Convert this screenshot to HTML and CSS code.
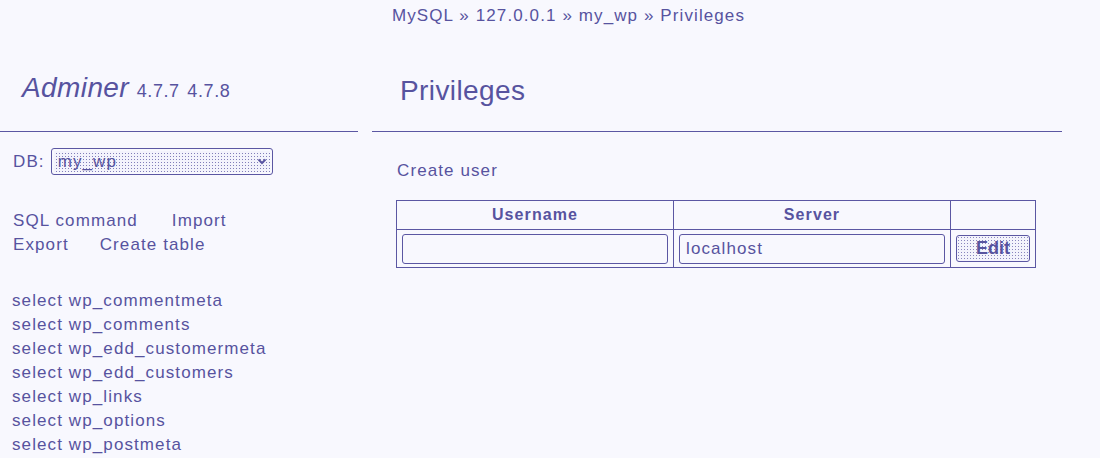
FILE: index.html
```html
<!DOCTYPE html>
<html>
<head>
<meta charset="utf-8">
<title>Privileges - Adminer</title>
<link rel="stylesheet" href="styles.css">
</head>
<body>
<div class="page">
  <div class="menu">
    <h1 class="logo"><a class="brand" href="#">Adminer</a> <span class="version">4.7.7</span> <a class="version" href="#">4.7.8</a></h1>
    <form class="dbform">
      <label class="dblabel">DB:</label>
      <div class="selectwrap">
        <select class="dbselect"><option>my_wp</option></select>
        <svg class="chev" width="10" height="7" viewBox="0 0 10 7"><path d="M1.5 1.5 L5 5 L8.5 1.5" fill="none" stroke="#5b57a3" stroke-width="2"/></svg>
      </div>
    </form>
    <div class="links">
      <div class="linkrow"><a href="#">SQL command</a><a href="#" class="gapl">Import</a></div>
      <div class="linkrow"><a href="#">Export</a><a href="#" class="gaps">Create table</a></div>
    </div>
    <ul class="tables">
      <li><a href="#">select</a> <a href="#">wp_commentmeta</a></li>
      <li><a href="#">select</a> <a href="#">wp_comments</a></li>
      <li><a href="#">select</a> <a href="#">wp_edd_customermeta</a></li>
      <li><a href="#">select</a> <a href="#">wp_edd_customers</a></li>
      <li><a href="#">select</a> <a href="#">wp_links</a></li>
      <li><a href="#">select</a> <a href="#">wp_options</a></li>
      <li><a href="#">select</a> <a href="#">wp_postmeta</a></li>
    </ul>
  </div>
  <div class="content">
    <p class="breadcrumb"><a href="#">MySQL</a> » <a href="#">127.0.0.1</a> » <a href="#">my_wp</a> » Privileges</p>
    <h2 class="title">Privileges</h2>
    <p class="create"><a href="#">Create user</a></p>
    <table class="grid">
      <thead>
        <tr><th class="c1">Username</th><th class="c2">Server</th><th class="c3"></th></tr>
      </thead>
      <tbody>
        <tr>
          <td><input class="field" type="text" value=""></td>
          <td><input class="field" type="text" value="localhost"></td>
          <td><button class="btn" type="button">Edit</button></td>
        </tr>
      </tbody>
    </table>
  </div>
</div>
</body>
</html>
```

FILE: styles.css
```css
html, body {
  margin: 0;
  padding: 0;
  background: #f8f8fe;
}
body {
  font-family: "Liberation Sans", Arial, sans-serif;
  font-size: 17px;
  letter-spacing: 1.1px;
  color: #57539f;
  width: 1100px;
  height: 458px;
  overflow: hidden;
}
a {
  color: #57539f;
  text-decoration: none;
}
.page {
  display: flex;
  gap: 14px;
  align-items: flex-start;
}
.menu {
  width: 358px;
  flex: none;
}
.logo {
  margin: 0;
  padding: 71px 0 26px 22px;
  height: 34px;
  border-bottom: 1px solid #5b57a3;
  font-size: 18px;
  letter-spacing: 0.6px;
  word-spacing: 2px;
  font-weight: normal;
  line-height: 34px;
  white-space: nowrap;
}
.brand {
  font-size: 28px;
  font-style: italic;
  letter-spacing: 0.4px;
}
.version {
  font-size: 18px;
  letter-spacing: 0.6px;
}
.dbform {
  display: flex;
  align-items: center;
  margin: 16px 0 0 13px;
}
.dblabel {
  margin-right: 6px;
}
.selectwrap {
  position: relative;
  width: 222px;
  height: 27px;
}
.dbselect {
  appearance: none;
  -webkit-appearance: none;
  width: 222px;
  height: 27px;
  border: 1px solid #5b57a3;
  border-radius: 3px;
  font-family: "Liberation Sans", Arial, sans-serif;
  font-size: 17px;
  letter-spacing: 1.1px;
  color: #57539f;
  padding: 0 0 0 6px;
  background-color: #f3f3fc;
  background-image: radial-gradient(circle, rgba(91, 87, 163, 0.75) 0.55px, transparent 0.9px);
  background-size: 3px 3px;
  box-shadow: inset 0 0 0 2px #f8f8fe;
}
.chev {
  position: absolute;
  right: 6px;
  top: 10px;
}
.links {
  margin: 34px 0 0 13px;
  line-height: 24px;
}
.linkrow a.gapl {
  margin-left: 34px;
}
.linkrow a.gaps {
  margin-left: 31px;
}
.tables {
  list-style: none;
  margin: 32px 0 0 12px;
  padding: 0;
  line-height: 24px;
}
.content {
  width: 690px;
  flex: none;
}
.breadcrumb {
  margin: 0;
  padding: 4px 0 0 20px;
  height: 23px;
  line-height: 24px;
}
.title {
  margin: 0;
  padding: 47px 0 23px 28px;
  height: 34px;
  line-height: 34px;
  font-size: 28px;
  letter-spacing: 0.4px;
  font-weight: normal;
  border-bottom: 1px solid #5b57a3;
}
.create {
  margin: 27px 0 0 25px;
  line-height: 24px;
}
.grid {
  margin: 17px 0 0 24px;
  border-collapse: collapse;
  border: 1px solid #5b57a3;
  width: 640px;
}
.grid th, .grid td {
  border: 1px solid #5b57a3;
  padding: 0;
}
.grid th {
  height: 28px;
  font-size: 16px;
  font-weight: bold;
  text-align: center;
}
.grid .c1 { width: 276px; }
.grid .c2 { width: 276px; }
.grid td {
  height: 37px;
  text-align: center;
}
.field {
  box-sizing: border-box;
  width: 266px;
  height: 30px;
  border: 1px solid #5b57a3;
  border-radius: 3px;
  background: #f8f8fe;
  font-family: "Liberation Sans", Arial, sans-serif;
  font-size: 17px;
  letter-spacing: 1.1px;
  color: #57539f;
  padding: 0 6px;
  display: block;
  margin: 0 auto;
}
.btn {
  box-sizing: border-box;
  width: 74px;
  height: 27px;
  border: 1px solid #5b57a3;
  border-radius: 3px;
  font-family: "Liberation Sans", Arial, sans-serif;
  font-size: 18px;
  font-weight: bold;
  letter-spacing: 0;
  color: #57539f;
  padding: 0;
  background-color: #f3f3fc;
  background-image: radial-gradient(circle, rgba(91, 87, 163, 0.7) 0.55px, transparent 0.9px);
  background-size: 3px 3px;
  display: block;
  margin: 0 auto;
}
```
